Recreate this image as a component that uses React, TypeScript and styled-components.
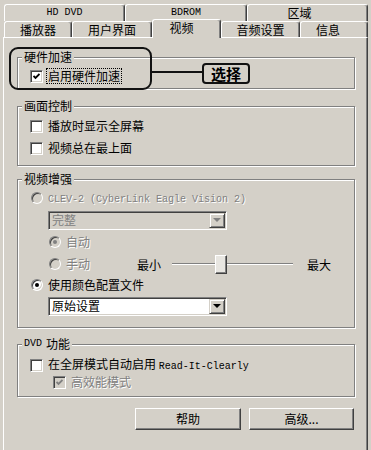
import React from "react";
import styled, { createGlobalStyle, css } from "styled-components";

const GlobalStyle = createGlobalStyle`
  html, body {
    margin: 0;
    padding: 0;
    background: #d4d0c8;
  }
  body {
    font-family: "Noto Sans CJK SC", "Noto Sans", sans-serif;
    font-size: 12px;
    color: #000;
  }
`;

const Window = styled.div`
  position: relative;
  width: 371px;
  height: 450px;
  overflow: hidden;
  box-sizing: border-box;
  padding-left: 3px;
  background: #d4d0c8;
`;

const TabStrip = styled.div`
  padding: 4px 0 0 1px;
`;

const TabRow = styled.div<{ $h: number }>`
  display: flex;
  height: ${(p) => p.$h}px;
`;

const Tab = styled.div<{ $w: number; $active?: boolean; $mono?: boolean; $pr?: number }>`
  width: ${(p) => p.$w}px;
  box-sizing: border-box;
  display: flex;
  align-items: center;
  justify-content: center;
  padding-right: ${(p) => p.$pr ?? 0}px;
  border-top: 1px solid #fff;
  border-left: 1px solid #fff;
  border-right: 1px solid #404040;
  box-shadow: inset -1px 0 #808080;
  border-radius: 3px 3px 0 0;
  background: #d4d0c8;
  line-height: 14px;
  white-space: nowrap;
  ${(p) =>
    p.$mono &&
    css`
      font-family: "Liberation Mono", monospace;
      font-size: 10px;
    `}
  ${(p) =>
    p.$active &&
    css`
      position: relative;
      z-index: 2;
      margin-top: -2px;
      height: 19px;
      padding-bottom: 3px;
    `}
`;

const Panel = styled.div`
  width: 365px;
  height: 430px;
  box-sizing: border-box;
  border-top: 1px solid #fff;
  border-left: 1px solid #fff;
  border-right: 1px solid #404040;
  box-shadow: inset -1px 0 #808080;
  padding: 12px 12px 0 13px;
`;

const Group = styled.fieldset<{ $mt?: number }>`
  margin: ${(p) => p.$mt ?? 0}px 0 0 0;
  padding: 0;
  min-width: 0;
  border: 1px solid #808080;
  box-shadow: inset 1px 1px #fff, 1px 1px #fff;
`;

const Legend = styled.legend`
  height: 14px;
  margin-left: 4px;
  padding: 0 2px;
  line-height: 14px;
  font-size: 12px;
  background: #d4d0c8;
  display: flex;
  align-items: center;
  gap: 4px;
`;

const GroupBody = styled.div<{ $pt?: number; $pb?: number }>`
  display: flex;
  flex-direction: column;
  padding: ${(p) => p.$pt ?? 0}px 0 ${(p) => p.$pb ?? 0}px 12px;
`;

const Row = styled.div<{ $h: number; $indent?: number }>`
  display: flex;
  align-items: center;
  height: ${(p) => p.$h}px;
  padding-left: ${(p) => p.$indent ?? 0}px;
`;

const Label = styled.span<{ $disabled?: boolean; $focus?: boolean }>`
  margin-left: 5px;
  line-height: 14px;
  white-space: nowrap;
  color: ${(p) => (p.$disabled ? "#808080" : "#000")};
  text-shadow: ${(p) => (p.$disabled ? "1px 1px #fff" : "none")};
  ${(p) =>
    p.$focus &&
    css`
      outline: 1px dotted #000;
      outline-offset: 0;
      padding: 0 1px;
      margin-left: 4px;
    `}
`;

const Mono = styled.span`
  font-family: "Liberation Mono", monospace;
  font-size: 10px;
  line-height: 12px;
`;

const CheckBox = styled.span<{ $disabled?: boolean }>`
  width: 13px;
  height: 13px;
  flex: none;
  box-sizing: border-box;
  display: flex;
  align-items: center;
  justify-content: center;
  border: 1px solid;
  border-color: #808080 #fff #fff #808080;
  box-shadow: inset 1px 1px #404040, inset -1px -1px #d4d0c8;
  background: ${(p) => (p.$disabled ? "#d4d0c8" : "#fff")};
  color: ${(p) => (p.$disabled ? "#808080" : "#000")};
`;

const RadioSlot = styled.span`
  width: 13px;
  height: 13px;
  flex: none;
  display: flex;
  align-items: center;
  justify-content: center;
`;

const RadioCircle = styled.span<{ $disabled?: boolean }>`
  width: 12px;
  height: 12px;
  box-sizing: border-box;
  border-radius: 50%;
  border: 1px solid;
  border-color: #808080 #fff #fff #808080;
  box-shadow: inset 1px 1px #404040, inset -1px -1px #d4d0c8;
  background: ${(p) => (p.$disabled ? "#d4d0c8" : "#fff")};
  display: flex;
  align-items: center;
  justify-content: center;
`;

const RadioDot = styled.span<{ $disabled?: boolean }>`
  width: 4px;
  height: 4px;
  border-radius: 50%;
  background: ${(p) => (p.$disabled ? "#808080" : "#000")};
`;

const Select = styled.div<{ $disabled?: boolean }>`
  width: 179px;
  height: 19px;
  box-sizing: border-box;
  display: flex;
  align-items: center;
  border: 1px solid;
  border-color: #808080 #fff #fff #808080;
  box-shadow: inset 1px 1px #404040, inset -1px -1px #d4d0c8;
  background: ${(p) => (p.$disabled ? "#d4d0c8" : "#fff")};
  color: ${(p) => (p.$disabled ? "#808080" : "#000")};
  padding: 1px 1px 1px 3px;
  line-height: 14px;
`;

const SelectText = styled.span`
  flex: 1;
`;

const ArrowButton = styled.span`
  width: 16px;
  height: 15px;
  box-sizing: border-box;
  display: flex;
  align-items: center;
  justify-content: center;
  border: 1px solid;
  border-color: #d4d0c8 #404040 #404040 #d4d0c8;
  box-shadow: inset 1px 1px #fff, inset -1px -1px #808080;
  background: #d4d0c8;
`;

const Arrow = styled.span<{ $disabled?: boolean }>`
  width: 0;
  height: 0;
  border-left: 4px solid transparent;
  border-right: 4px solid transparent;
  border-top: 4px solid ${(p) => (p.$disabled ? "#808080" : "#000")};
`;

const RadioPart = styled.div`
  width: 89px;
  display: flex;
  align-items: center;
`;

const SliderLabel = styled.span`
  width: 35px;
  white-space: nowrap;
`;

const Track = styled.div`
  width: 121px;
  height: 20px;
  display: flex;
  align-items: center;
  margin-right: 14px;
`;

const TrackLine = styled.span<{ $w?: number }>`
  height: 2px;
  box-sizing: border-box;
  border-top: 1px solid #808080;
  border-bottom: 1px solid #fff;
  ${(p) => (p.$w ? `width: ${p.$w}px;` : "flex: 1;")}
`;

const Thumb = styled.span`
  width: 12px;
  height: 19px;
  box-sizing: border-box;
  border: 1px solid;
  border-color: #fff #404040 #404040 #fff;
  box-shadow: inset -1px -1px #808080;
  background: #e8e6e1;
`;

const ButtonRow = styled.div`
  display: flex;
  justify-content: flex-end;
  gap: 8px;
  margin: 11px 1px 0 0;
`;

const Button = styled.div<{ $w: number }>`
  width: ${(p) => p.$w}px;
  height: 22px;
  box-sizing: border-box;
  display: flex;
  align-items: center;
  justify-content: center;
  border: 1px solid;
  border-color: #fff #404040 #404040 #fff;
  box-shadow: inset -1px -1px #808080;
  background: #d4d0c8;
  line-height: 14px;
`;

const Annotation = styled.div`
  position: absolute;
  left: 9px;
  top: 47px;
  width: 143px;
  height: 43px;
  box-sizing: border-box;
  border: 2px solid #111;
  border-radius: 9px;
`;

const Connector = styled.div`
  position: absolute;
  left: 151px;
  top: 71px;
  width: 52px;
  height: 2px;
  background: #111;
`;

const Callout = styled.div`
  position: absolute;
  left: 202px;
  top: 63px;
  width: 48px;
  height: 21px;
  box-sizing: border-box;
  border: 2px solid #111;
  border-radius: 4px;
  background: #d4d0c8;
  display: flex;
  align-items: center;
  justify-content: center;
  font-weight: bold;
  font-size: 15px;
  line-height: 17px;
`;

const Check = ({ disabled }: { disabled?: boolean }) => (
  <CheckBox $disabled={disabled}>
    <svg width="7" height="7" viewBox="0 0 7 7">
      <polyline
        points="0.5,3 2.5,5 6.5,1"
        fill="none"
        stroke="currentColor"
        strokeWidth="1.8"
      />
    </svg>
  </CheckBox>
);

const Radio = ({ checked, disabled }: { checked?: boolean; disabled?: boolean }) => (
  <RadioSlot>
    <RadioCircle $disabled={disabled}>
      {checked && <RadioDot $disabled={disabled} />}
    </RadioCircle>
  </RadioSlot>
);

const Dropdown = ({ value, disabled }: { value: string; disabled?: boolean }) => (
  <Select $disabled={disabled}>
    <SelectText>{value}</SelectText>
    <ArrowButton>
      <Arrow $disabled={disabled} />
    </ArrowButton>
  </Select>
);

const App = () => {
  return (
    <Window>
      <GlobalStyle />
      <TabStrip>
        <TabRow $h={17}>
          <Tab $w={121} $mono>HD DVD</Tab>
          <Tab $w={122} $mono>BDROM</Tab>
          <Tab $w={121} $pr={16}>区域</Tab>
        </TabRow>
        <TabRow $h={16}>
          <Tab $w={68}>播放器</Tab>
          <Tab $w={80}>用户界面</Tab>
          <Tab $w={69} $active $pr={10}>视频</Tab>
          <Tab $w={79}>音频设置</Tab>
          <Tab $w={68} $pr={12}>信息</Tab>
        </TabRow>
      </TabStrip>

      <Panel>
        <Group>
          <Legend>硬件加速</Legend>
          <GroupBody>
            <Row $h={24}>
              <Check />
              <Label $focus>启用硬件加速</Label>
            </Row>
          </GroupBody>
        </Group>

        <Group $mt={10}>
          <Legend>画面控制</Legend>
          <GroupBody $pt={2} $pb={6}>
            <Row $h={22}>
              <CheckBox />
              <Label>播放时显示全屏幕</Label>
            </Row>
            <Row $h={22}>
              <CheckBox />
              <Label>视频总在最上面</Label>
            </Row>
          </GroupBody>
        </Group>

        <Group $mt={6}>
          <Legend>视频增强</Legend>
          <GroupBody $pb={11}>
            <Row $h={24}>
              <Radio disabled />
              <Label $disabled>
                <Mono>CLEV-2 (CyberLink Eagle Vision 2)</Mono>
              </Label>
            </Row>
            <Row $h={20} $indent={18}>
              <Dropdown value="完整" disabled />
            </Row>
            <Row $h={24} $indent={18}>
              <Radio checked disabled />
              <Label $disabled>自动</Label>
            </Row>
            <Row $h={20} $indent={18}>
              <RadioPart>
                <Radio disabled />
                <Label $disabled>手动</Label>
              </RadioPart>
              <SliderLabel>最小</SliderLabel>
              <Track>
                <TrackLine $w={43} />
                <Thumb />
                <TrackLine />
              </Track>
              <span>最大</span>
            </Row>
            <Row $h={22}>
              <Radio checked />
              <Label>使用颜色配置文件</Label>
            </Row>
            <Row $h={20} $indent={18}>
              <Dropdown value="原始设置" />
            </Row>
          </GroupBody>
        </Group>

        <Group $mt={9}>
          <Legend>
            <Mono>DVD</Mono>
            <span>功能</span>
          </Legend>
          <GroupBody $pt={5} $pb={6}>
            <Row $h={18}>
              <CheckBox />
              <Label>
                在全屏模式自动启用 <Mono>Read-It-Clearly</Mono>
              </Label>
            </Row>
            <Row $h={16} $indent={23}>
              <Check disabled />
              <Label $disabled>高效能模式</Label>
            </Row>
          </GroupBody>
        </Group>

        <ButtonRow>
          <Button $w={106}>帮助</Button>
          <Button $w={105}>高级...</Button>
        </ButtonRow>
      </Panel>

      <Annotation />
      <Connector />
      <Callout>选择</Callout>
    </Window>
  );
};

export default App;
